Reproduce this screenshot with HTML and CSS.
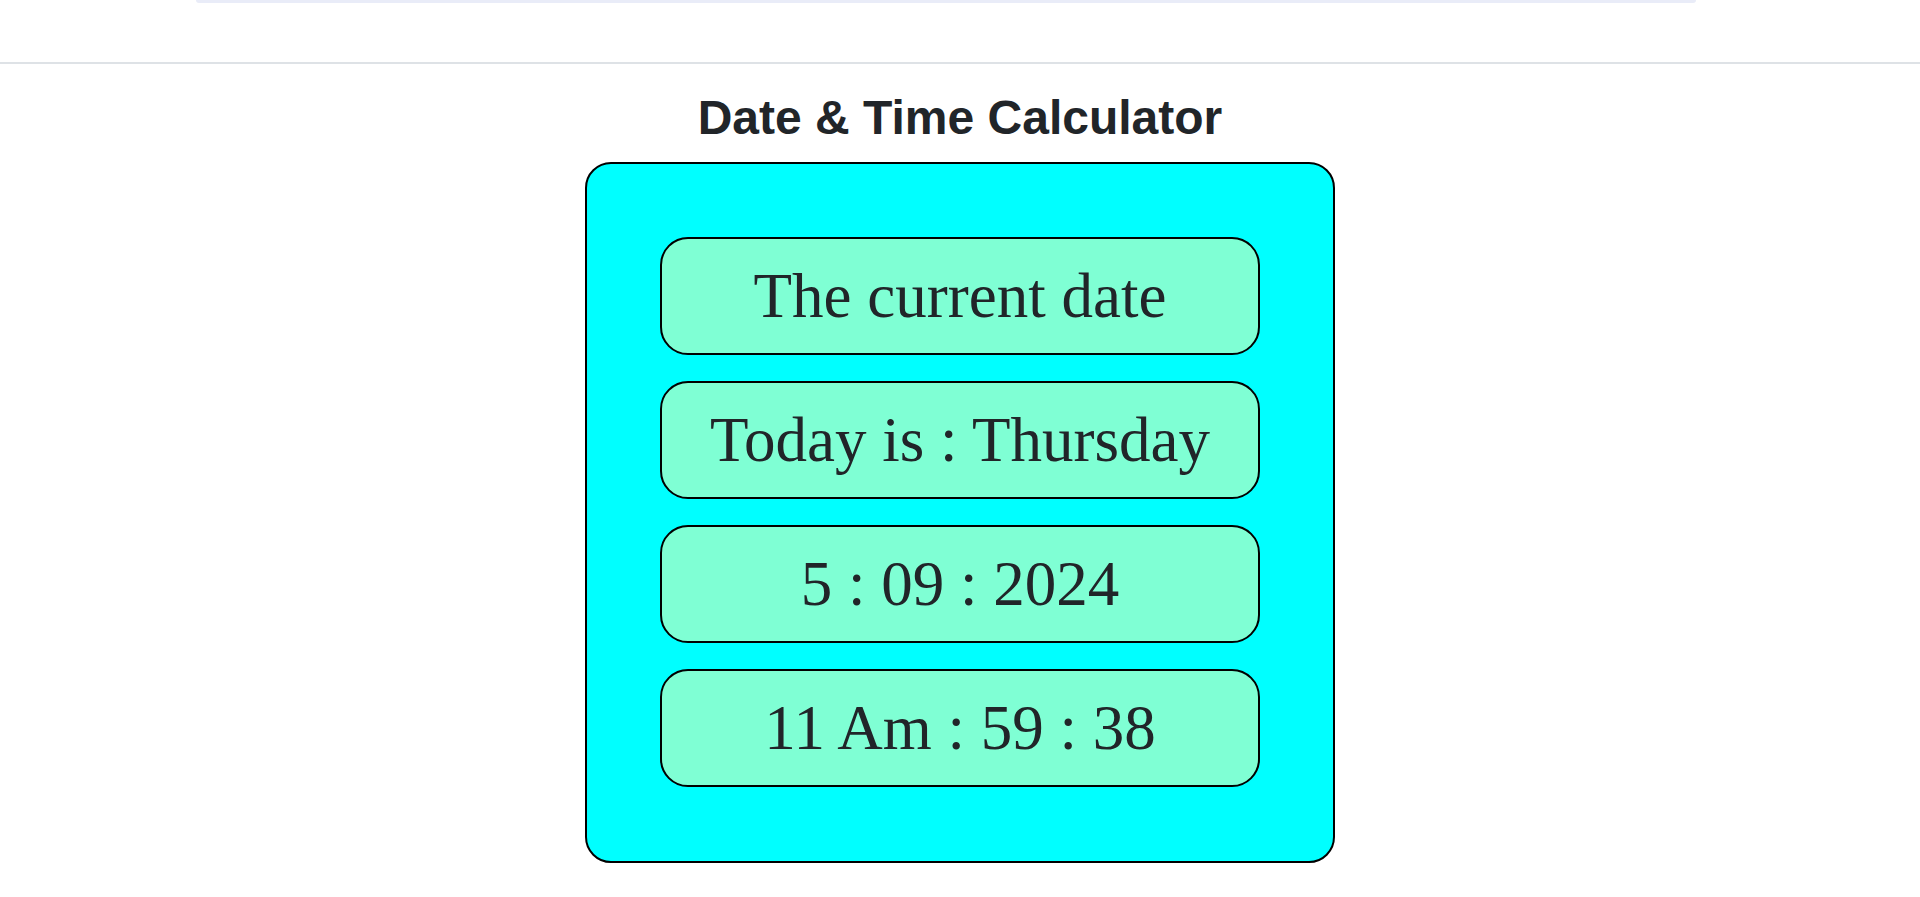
FILE: index.html
```html
<!DOCTYPE html>
<html lang="en">
<head>
<meta charset="utf-8">
<title>Date &amp; Time Calculator</title>
<link rel="stylesheet" href="styles.css">
</head>
<body>
<div class="top-card"></div>
<hr class="divider">
<main class="page">
  <h1 class="title">Date &amp; Time Calculator</h1>
  <section class="calc">
    <div class="cell">The current date</div>
    <div class="cell">Today is : Thursday</div>
    <div class="cell">5 : 09 : 2024</div>
    <div class="cell">11 Am : 59 : 38</div>
  </section>
</main>
</body>
</html>
```
FILE: styles.css
```css
* { box-sizing: border-box; }
html, body { margin: 0; padding: 0; background: #ffffff; }
body { font-family: "Liberation Sans", Arial, sans-serif; color: #212529; }

.top-card {
  margin-left: 196px;
  width: 1500px;
  height: 3px;
  background: #e9ecf8;
  border-radius: 0 0 8px 8px;
}

.divider {
  margin: 59px 0 0 0;
  border: 0;
  height: 2px;
  background: #dee2e6;
}

.page {
  display: flex;
  flex-direction: column;
  align-items: center;
}

.title {
  margin: 26px 0 17px 0;
  font-family: "Liberation Sans", Arial, sans-serif;
  font-weight: 700;
  font-size: 48px;
  line-height: 55px;
  color: #212529;
}

.calc {
  width: 750px;
  padding: 73px 73px 74px;
  background: #00ffff;
  border: 2px solid #000;
  border-radius: 26px;
  display: flex;
  flex-direction: column;
  gap: 26px;
}

.cell {
  height: 118px;
  padding: 20px 0;
  background: #7fffd4;
  border: 2px solid #000;
  border-radius: 28px;
  font-family: "Liberation Serif", "Times New Roman", serif;
  font-size: 63px;
  line-height: 74px;
  text-align: center;
  color: #212529;
}
```
